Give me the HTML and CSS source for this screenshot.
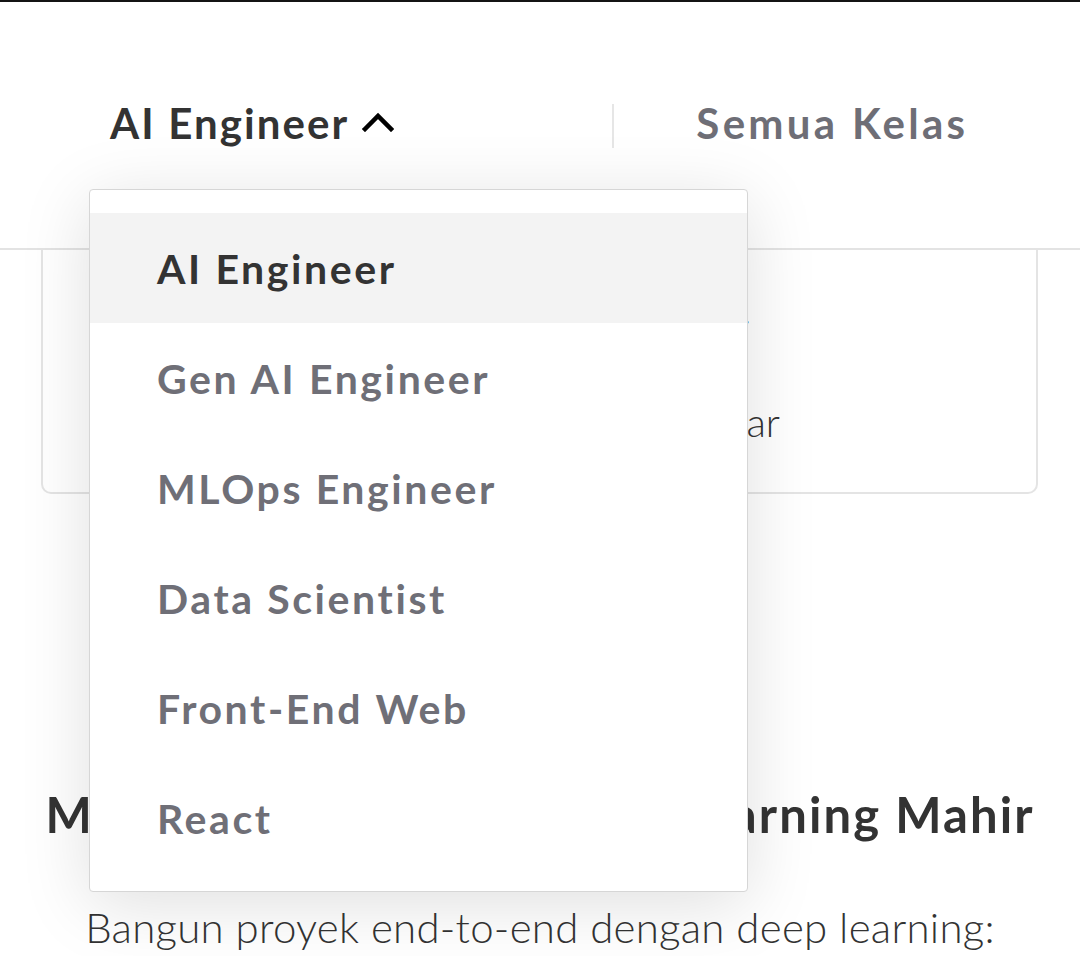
FILE: index.html
```html
<!DOCTYPE html>
<html lang="id">
<head>
<meta charset="utf-8">
<title>AI Engineer</title>
<link rel="stylesheet" href="styles.css">
</head>
<body>
<header class="header">
  <nav class="nav">
    <div class="nav-item nav-item--active">
      <span class="nav-label">AI Engineer</span>
      <svg class="chevron" width="32" height="20" viewBox="0 0 32 20" aria-hidden="true">
        <polyline points="3,17 16,4 29,17" fill="none" stroke="#000" stroke-width="4.5" stroke-linecap="square" stroke-linejoin="miter"/>
      </svg>
    </div>
    <div class="nav-divider"></div>
    <div class="nav-item">
      <span class="nav-label nav-label--muted">Semua Kelas</span>
    </div>
  </nav>
  <ul class="dropdown">
    <li class="dropdown-item dropdown-item--active">AI Engineer</li>
    <li class="dropdown-item">Gen AI Engineer</li>
    <li class="dropdown-item">MLOps Engineer</li>
    <li class="dropdown-item">Data Scientist</li>
    <li class="dropdown-item">Front-End Web</li>
    <li class="dropdown-item">React</li>
  </ul>
</header>
<main class="main">
  <section class="card">
    <div class="card-body">
      <p class="card-line card-line--first">Dipelajari oleh ribuan siswa.</p>
      <p class="card-line">Estimasi 120 jam belajar</p>
    </div>
  </section>
  <h2 class="title">Menjadi AI Engineer Deep Learning Mahir</h2>
  <p class="lead">Bangun proyek end-to-end dengan deep learning:</p>
</main>
</body>
</html>
```
FILE: styles.css
```css
html, body {
  margin: 0;
  padding: 0;
}
body {
  background: #ffffff;
  font-family: "Lato", "Liberation Sans", sans-serif;
  color: #333333;
  width: 1080px;
  height: 956px;
  overflow: hidden;
}
.header {
  position: relative;
  z-index: 5;
  height: 246px;
  border-top: 2px solid #141414;
  border-bottom: 2px solid #e3e3e3;
  background: #ffffff;
}
.nav {
  display: flex;
  align-items: flex-start;
  padding-top: 96px;
  padding-left: 110px;
}
.nav-item {
  display: flex;
  align-items: center;
  height: 50px;
}
.nav-label {
  font-size: 42px;
  line-height: 50px;
  font-weight: 700;
  letter-spacing: 2.1px;
  color: #333333;
}
.nav-label--muted {
  color: #6e6e76;
  letter-spacing: 3.3px;
}
.chevron {
  margin-left: 13px;
  margin-top: -3px;
}
.nav-divider {
  width: 2px;
  height: 44px;
  margin-top: 6px;
  margin-left: 218px;
  margin-right: 82px;
  background: #e6e6e6;
}
.dropdown {
  position: absolute;
  top: 187px;
  left: 89px;
  width: 657px;
  margin: 0;
  padding: 23px 0 18px;
  list-style: none;
  background: #ffffff;
  border: 1px solid #d6d6d6;
  border-radius: 4px;
  box-shadow: 0 12px 70px rgba(0, 0, 0, 0.13);
}
.dropdown-item {
  height: 110px;
  display: flex;
  align-items: center;
  padding-left: 67px;
  font-size: 41px;
  font-weight: 700;
  letter-spacing: 2.6px;
  color: #6f6f77;
}
.dropdown-item--active {
  background: #f3f3f3;
  color: #333333;
}
.main {
  position: relative;
}
.card {
  height: 242px;
  margin: 0 42px 0 41px;
  border: 2px solid #e4e4e4;
  border-top: 0;
  border-radius: 0 0 10px 10px;
}
.card-body {
  width: 737px;
  display: flex;
  flex-direction: column;
  align-items: flex-end;
}
.card-line {
  margin: 0;
  font-size: 40px;
  font-weight: 300;
  line-height: 50px;
  color: #333333;
}
.card-line--first {
  margin-top: 34px;
  margin-right: 29px;
  margin-bottom: 63px;
}
.title {
  margin: 290px 0 0;
  text-align: center;
  font-size: 49px;
  line-height: 60px;
  font-weight: 700;
  letter-spacing: 2.1px;
  color: #333333;
}
.lead {
  margin: 55px 0 0;
  text-align: center;
  font-size: 42px;
  line-height: 56px;
  font-weight: 300;
  letter-spacing: 0.25px;
  color: #333333;
}
```
